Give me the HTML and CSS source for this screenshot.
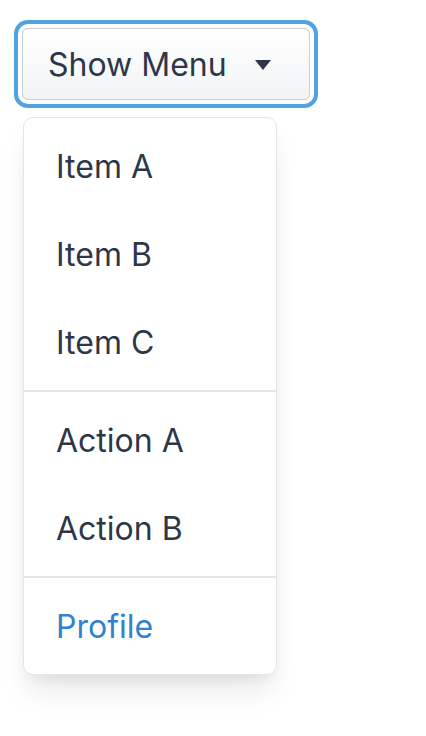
FILE: index.html
```html
<!DOCTYPE html>
<html>
<head>
<meta charset="utf-8">
<link rel="stylesheet" href="styles.css">
</head>
<body>
<div class="page">
  <button class="trigger">
    <span class="trigger-label">Show Menu</span>
    <svg class="caret" width="16" height="10" viewBox="0 0 16 10"><path d="M0 0 H16 L8 10 Z" fill="#2d3748"/></svg>
  </button>
  <div class="menu">
    <div class="section">
      <div class="item">Item A</div>
      <div class="item">Item B</div>
      <div class="item">Item C</div>
    </div>
    <div class="section">
      <div class="item">Action A</div>
      <div class="item">Action B</div>
    </div>
    <div class="section">
      <div class="item link">Profile</div>
    </div>
  </div>
</div>
</body>
</html>
```

FILE: styles.css
```css
html, body {
  margin: 0;
  padding: 0;
  background: #ffffff;
}
body {
  font-family: Inter, "Noto Sans", sans-serif;
  color: #2d3748;
}
.page {
  padding: 28px 0 60px 22px;
  display: flex;
  flex-direction: column;
  align-items: flex-start;
}
.trigger {
  box-sizing: border-box;
  width: 288px;
  height: 72px;
  display: flex;
  align-items: center;
  justify-content: space-between;
  padding: 0 38px 0 25px;
  border: 1.5px solid #cbd0d8;
  border-radius: 6px;
  background: linear-gradient(#ffffff, #f1f3f6);
  box-shadow: 0 0 0 4px #ffffff, 0 0 0 8px #4fa3e3;
  font-family: Inter, "Noto Sans", sans-serif;
  font-size: 32px;
  color: #2d3748;
  cursor: pointer;
}
.caret {
  display: block;
  margin-top: 2px;
}
.menu {
  box-sizing: border-box;
  margin-top: 17px;
  margin-left: 1px;
  width: 254px;
  border: 1.5px solid #e4e4e9;
  border-radius: 10px;
  background: #ffffff;
  box-shadow: 0 20px 30px -6px rgba(0,0,0,0.10), 0 8px 12px -4px rgba(0,0,0,0.05);
  overflow: hidden;
}
.section {
  padding: 4px 0;
}
.section + .section {
  border-top: 2px solid #e4e4e9;
}
.item {
  height: 88px;
  display: flex;
  align-items: center;
  padding-left: 32px;
  font-size: 32px;
  color: #2d3748;
}
.item.link {
  color: #3182ce;
}
```
